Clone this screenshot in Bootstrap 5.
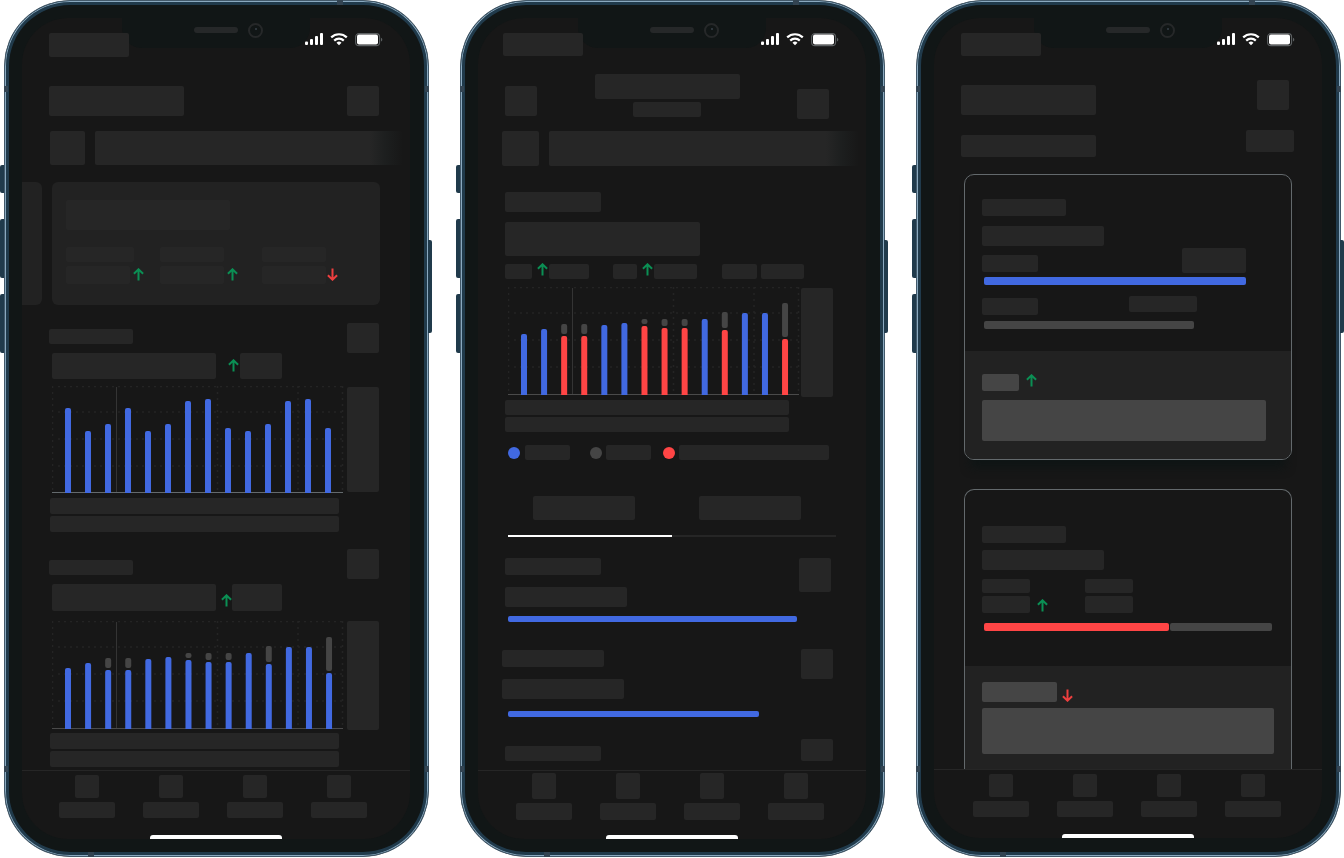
<!DOCTYPE html>
<html lang="en">
<head>
<meta charset="utf-8">
<meta name="viewport" content="width=device-width, initial-scale=1">
<title>Energy app wireframes</title>
<link href="https://cdn.jsdelivr.net/npm/bootstrap@5.3.0/dist/css/bootstrap.min.css" rel="stylesheet">
<script src="https://cdn.jsdelivr.net/npm/bootstrap@5.3.0/dist/js/bootstrap.bundle.min.js" defer></script>
<style>
:root{--block:#262626;--screen:#171717;--bezel:#111616;--blue:#4169e1;--red:#ff4545;--grey:#454545;--steel:#203a4b}
body{background:#fff;font-family:"Liberation Sans",sans-serif;overflow-x:hidden}
.gallery{display:grid;grid-template-columns:repeat(auto-fit,minmax(400px,1fr));gap:31px;padding:0 3px 0 4px}

/* device */
.phone{position:relative;background:var(--bezel);border:1px solid #42596a;border-radius:66px;padding:17px 18px 17px 17px;
 box-shadow:inset 0 0 0 1px #8aa9bf,inset 0 0 0 4px var(--steel)}
.screen{background:var(--screen);border-radius:46px;overflow:hidden;position:relative;z-index:0;padding-top:15px}
.key{position:absolute;width:4px;background:var(--steel)}
.key-l{left:-5px;border-radius:2px 0 0 2px}
.key-r{right:-4px;border-radius:0 2px 2px 0;top:239px;height:93px}
.key-mute{top:164px;height:28px}.key-up{top:218px;height:59px}.key-down{top:293px;height:59px}
.band{position:absolute;background:#334452}
.band-a,.band-b{width:4px;height:6px}
.band-a{top:85px}.band-b{bottom:84px}
.band-l{left:-1px}.band-r{right:-1px}
.band-top{top:-1px;right:85px;width:6px;height:5px}
.band-bot{bottom:-1px;left:83px;width:6px;height:5px}
.notch{position:absolute;z-index:-1;top:0;left:100px;right:100px;height:30px;background:var(--bezel);border-radius:0 0 20px 20px}
.speaker{position:absolute;left:72px;top:9px;width:44px;height:6px;border-radius:3px;background:#262829}
.lens{position:absolute;left:126px;top:5px;width:15px;height:15px;border-radius:50%;border:2px solid #262829}
.lens::after{content:"";position:absolute;left:5px;top:3px;width:2px;height:2px;border-radius:50%;background:#39424a}

/* placeholder blocks */
.blk{display:block;flex:none;background:var(--block);border:0;padding:0;border-radius:2px}
.blk-mid{background:var(--grey)}
.fade-bar{background:linear-gradient(to right,var(--block) calc(100% - 33px),#1d1f1f calc(100% - 18px),var(--screen))}
.meter{flex:none;border-radius:2px;background:var(--blue)}
.arrow{flex:none;width:11px;height:13px;fill:none;stroke-width:2;stroke:#0b8f54}
.arrow-down{stroke:#ed3f3f}
.dot{flex:none;width:12px;height:12px;border-radius:50%;background:var(--blue)}
.tone-red{background:var(--red)}.tone-grey{background:var(--grey)}
.slide{background:#222;border-radius:6px;height:123px}
.slide-prev{border-radius:0 6px 6px 0;width:20px}
.chart{height:108px;flex:none;width:292px}
.chart-tall{height:109px}
.tab-line{height:2px;background:#262626}
.tab-line span{display:block;width:50%;height:2px;background:#fff}
.panel{border:1px solid #63696c;border-radius:10px;overflow:hidden}
.panel-float{box-shadow:0 14px 10px -6px #0f1515}
.panel-cut{border-bottom:0;border-radius:10px 10px 0 0}
.panel-foot{background:#222}
.tabbar{border-top:1px solid #262626;padding-left:37px;gap:28px}
.tabbar-2{padding-left:38px}.tabbar-3{padding-left:39px}
.home{height:4px;width:132px;background:#fff;border-radius:3px 3px 0 0}

/* sizes */
.w24{width:24px}.w27{width:27px}.w32{width:32px}.w35{width:35px}.w37{width:37px}.w40{width:40px}.w42{width:42px}.w43{width:43px}.w45{width:45px}.w48{width:48px}.w50{width:50px}.w56{width:56px}
.w64{width:64px}.w68{width:68px}.w80{width:80px}.w84{width:84px}.w96{width:96px}.w102{width:102px}.w122{width:122px}.w135{width:135px}
.w145{width:145px}.w150{width:150px}.w164{width:164px}.w195{width:195px}.w210{width:210px}.w251{width:251px}.w262{width:262px}
.w185{width:185px}.w284{width:284px}.w289{width:289px}.w292{width:292px}.w75x{width:75px}
.ht6{height:6px}.ht8{height:8px}.ht14{height:14px}.ht15{height:15px}.ht16{height:16px}.ht17{height:17px}.ht18{height:18px}.ht20{height:20px}
.ht22{height:22px}.ht23{height:23px}.ht24{height:24px}.ht25{height:25px}.ht26{height:26px}.ht27{height:27px}.ht30{height:30px}
.ht34{height:34px}.ht35{height:35px}.ht41{height:41px}.ht46{height:46px}.ht105{height:105px}.ht109{height:109px}
/* top gaps */
.tp1{margin-top:1px}.tp2{margin-top:2px}.tp3{margin-top:3px}.tp4{margin-top:4px}.tp5{margin-top:5px}.tp6{margin-top:6px}.tp7{margin-top:7px}
.tp8{margin-top:8px}.tp9{margin-top:9px}.tp10{margin-top:10px}.tp11{margin-top:11px}.tp12{margin-top:12px}.tp13{margin-top:13px}
.tp15{margin-top:15px}.tp17{margin-top:17px}.tp18{margin-top:18px}.tp21{margin-top:21px}.tp22{margin-top:22px}.tp24{margin-top:24px}
.tp26{margin-top:26px}.tp27{margin-top:27px}.tp29{margin-top:29px}.tp35{margin-top:35px}.tp36{margin-top:36px}
.pt16{padding-top:16px}.pt18{padding-top:18px}.pt23{padding-top:23px}.pb15{padding-bottom:15px}.pb18{padding-bottom:18px}.pt24{padding-top:24px}.pt36{padding-top:36px}
/* side gaps */
.st1{margin-left:1px}.st3{margin-left:3px}.st4{margin-left:4px}.st5{margin-left:5px}.st7{margin-left:7px}.st10{margin-left:10px}.st12{margin-left:12px}
.st14{margin-left:14px}.st16{margin-left:16px}.st17{margin-left:17px}.st19{margin-left:19px}.st20{margin-left:20px}.st24{margin-left:24px}.st25{margin-left:25px}
.st27{margin-left:27px}.st28{margin-left:28px}.st30{margin-left:30px}.st55{margin-left:55px}.st37{margin-left:37px}.st64{margin-left:64px}
.en7{margin-right:7px}.en27{margin-right:27px}.en28{margin-right:28px}.en30{margin-right:30px}.en31{margin-right:31px}.en33{margin-right:33px}.en35{margin-right:35px}.en37{margin-right:37px}
.en45{margin-right:45px}.en94{margin-right:94px}
</style>
</head>
<body>
<svg class="d-none" xmlns="http://www.w3.org/2000/svg">
  <symbol id="up" viewBox="0 0 11 13"><path d="M5.5 12.5V1.5M.9 5.7 5.5 1.3l4.6 4.4"/></symbol>
  <symbol id="down" viewBox="0 0 11 13"><path d="M5.5 .5v11M.9 7.3l4.6 4.4 4.6-4.4"/></symbol>
  <symbol id="status" viewBox="0 0 78 14">
    <g fill="#fff"><rect y="8.5" width="3" height="3.5" rx="1"/><rect x="5" y="6" width="3" height="6" rx="1"/><rect x="10" y="3" width="3" height="9" rx="1"/><rect x="15" width="3" height="12" rx="1"/></g>
    <g fill="none" stroke="#fff" stroke-width="2.2"><path d="M26.2 4.4a11.2 11.2 0 0 1 15.6 0"/><path d="M29.2 7.6a7 7 0 0 1 9.6 0"/></g>
    <path fill="#fff" d="M34 12.2l-2.5-2.5a3.8 3.8 0 0 1 5 0z"/>
    <rect x="50.6" y=".6" width="24" height="12" rx="3.4" fill="none" stroke="#5d6163" stroke-width="1.1"/>
    <rect x="52" y="1.6" width="21" height="10" rx="2" fill="#fff"/>
    <path fill="#5d6163" d="M76 4.8c1.8.6 1.8 3.2 0 3.8z"/>
  </symbol>
</svg>

<main class="gallery">

  <!-- Overview -->
  <section class="phone" aria-label="Overview">
    <i class="key key-l key-mute"></i><i class="key key-l key-up"></i><i class="key key-l key-down"></i><i class="key key-r"></i>
    <i class="band band-a band-l"></i><i class="band band-a band-r"></i><i class="band band-b band-l"></i><i class="band band-b band-r"></i><i class="band band-top"></i><i class="band band-bot"></i>
    <div class="screen">
      <div class="notch"><i class="speaker"></i><i class="lens"></i></div>
      <header class="d-flex justify-content-between st27 en27"><span class="blk w80 ht24"></span><svg width="78" height="14"><use href="#status"/></svg></header>
      <div class="d-flex justify-content-between tp29 st27 en31"><span class="blk w135 ht30"></span><button class="blk w32 ht30" aria-label="Menu"></button></div>
      <div class="d-flex tp15 st28 en7"><button class="blk w35 ht34" aria-label="Filter"></button><span class="blk fade-bar flex-fill st10 ht34"></span></div>
      <div class="d-flex tp17 en30">
        <div class="slide slide-prev"></div>
        <div class="slide flex-fill st10 pt18">
          <span class="blk w164 ht30 st14"></span>
          <div class="d-flex tp17 st14">
            <div><span class="blk w68 ht15"></span><div class="d-flex tp4"><span class="blk w64 ht18"></span><svg class="arrow st3 tp2"><use href="#up"/></svg></div></div>
            <div class="st16"><span class="blk w64 ht15"></span><div class="d-flex tp4"><span class="blk w64 ht18"></span><svg class="arrow st3 tp2"><use href="#up"/></svg></div></div>
            <div class="st24"><span class="blk w64 ht15"></span><div class="d-flex tp4"><span class="blk w64 ht18"></span><svg class="arrow arrow-down st1 tp2"><use href="#down"/></svg></div></div>
          </div>
        </div>
      </div>

      <div class="d-flex justify-content-between tp18 st27 en31"><span class="blk w84 ht15 tp6"></span><button class="blk w32 ht30" aria-label="More"></button></div>
      <div class="d-flex st30"><span class="blk w164 ht26"></span><svg class="arrow tp6 st12"><use href="#up"/></svg><span class="blk w42 ht26 st1"></span></div>
      <div class="d-flex tp7 st30 en31 justify-content-between"><svg class="chart" data-series="weekly" role="img" aria-label="Weekly chart"></svg><span class="blk w32 ht105 tp1"></span></div>
      <span class="blk w289 ht16 tp4 st28"></span><span class="blk w289 ht16 tp2 st28"></span>

      <div class="d-flex justify-content-between tp17 st27 en31"><span class="blk w84 ht15 tp11"></span><button class="blk w32 ht30" aria-label="More"></button></div>
      <div class="d-flex tp5 st30"><span class="blk w164 ht27"></span><svg class="arrow tp10 st5"><use href="#up"/></svg><span class="blk w50 ht27"></span></div>
      <div class="d-flex tp10 st30 en31 justify-content-between"><svg class="chart chart-tall" data-series="trend" role="img" aria-label="Trend chart"></svg><span class="blk w32 ht109"></span></div>
      <span class="blk w289 ht16 tp3 st28"></span><span class="blk w289 ht16 tp2 st28"></span>

      <nav class="tabbar d-flex tp3">
        <a href="#" class="tp4" aria-label="Home"><span class="blk w24 ht23 mx-auto"></span><span class="blk w56 ht16 tp4"></span></a>
        <a href="#" class="tp4" aria-label="Usage"><span class="blk w24 ht23 mx-auto"></span><span class="blk w56 ht16 tp4"></span></a>
        <a href="#" class="tp4" aria-label="Goals"><span class="blk w24 ht23 mx-auto"></span><span class="blk w56 ht16 tp4"></span></a>
        <a href="#" class="tp4" aria-label="Account"><span class="blk w24 ht23 mx-auto"></span><span class="blk w56 ht16 tp4"></span></a>
      </nav>
      <div class="home mx-auto tp17"></div>
    </div>
  </section>

  <!-- Detail -->
  <section class="phone" aria-label="Detail">
    <i class="key key-l key-mute"></i><i class="key key-l key-up"></i><i class="key key-l key-down"></i><i class="key key-r"></i>
    <i class="band band-a band-l"></i><i class="band band-a band-r"></i><i class="band band-b band-l"></i><i class="band band-b band-r"></i><i class="band band-top"></i><i class="band band-bot"></i>
    <div class="screen">
      <div class="notch"><i class="speaker"></i><i class="lens"></i></div>
      <header class="d-flex justify-content-between st25 en27"><span class="blk w80 ht23"></span><svg width="78" height="14"><use href="#status"/></svg></header>
      <div class="d-flex justify-content-between align-items-start tp18 st27 en37"><button class="blk w32 ht30 tp12" aria-label="Back"></button>
        <div><span class="blk w145 ht25"></span><span class="blk w68 ht15 tp3 mx-auto"></span></div>
        <button class="blk w32 ht30 tp15" aria-label="Menu"></button></div>
      <div class="d-flex tp12 st24 en7"><button class="blk w37 ht35" aria-label="Filter"></button><span class="blk fade-bar flex-fill st10 ht35"></span></div>
      <span class="blk w96 ht20 tp26 st27"></span>
      <span class="blk w195 ht34 tp10 st27"></span>
      <div class="d-flex tp7 st27">
        <span class="blk w27 ht15 tp1"></span><svg class="arrow st5"><use href="#up"/></svg><span class="blk w40 ht15 tp1 st1"></span>
        <span class="blk w24 ht15 tp1 st24"></span><svg class="arrow st5"><use href="#up"/></svg><span class="blk w43 ht15 tp1 st1"></span>
        <span class="blk w35 ht15 tp1 st25"></span><span class="blk w43 ht15 tp1 st4"></span>
      </div>
      <div class="d-flex tp8 st30 en33 justify-content-between"><svg class="chart chart-tall" data-series="trend" data-alert="true" role="img" aria-label="Usage chart"></svg><span class="blk w32 ht109 tp1"></span></div>
      <span class="blk w284 ht15 tp3 st27"></span><span class="blk w284 ht15 tp2 st27"></span>
      <div class="d-flex align-items-center tp13 st30">
        <span class="dot"></span><span class="blk w45 ht15 st5"></span>
        <span class="dot tone-grey st20"></span><span class="blk w45 ht15 st4"></span>
        <span class="dot tone-red st12"></span><span class="blk w150 ht15 st4"></span>
      </div>
      <div class="d-flex tp36 st55"><button class="blk w102 ht24" aria-label="First tab"></button><button class="blk w102 ht24 st64" aria-label="Second tab"></button></div>
      <div class="tab-line tp15 st30 en30"><span></span></div>

      <div class="d-flex justify-content-between tp21 st27 en35"><div><span class="blk w96 ht17"></span><span class="blk w122 ht20 tp12"></span></div><button class="blk w32 ht34" aria-label="More"></button></div>
      <div class="meter w289 ht6 tp9 st30"></div>
      <div class="d-flex justify-content-between tp27 st24 en33"><div><span class="blk w102 ht17 tp1"></span><span class="blk w122 ht20 tp12"></span></div><button class="blk w32 ht30" aria-label="More"></button></div>
      <div class="meter w251 ht6 tp12 st30"></div>
      <div class="d-flex justify-content-between tp22 st27 en33"><span class="blk w96 ht15 tp7"></span><button class="blk w32 ht22" aria-label="More"></button></div>

      <nav class="tabbar tabbar-2 d-flex tp9">
        <a href="#" class="tp2" aria-label="Home"><span class="blk w24 ht26 mx-auto"></span><span class="blk w56 ht17 tp4"></span></a>
        <a href="#" class="tp2" aria-label="Usage"><span class="blk w24 ht26 mx-auto"></span><span class="blk w56 ht17 tp4"></span></a>
        <a href="#" class="tp2" aria-label="Goals"><span class="blk w24 ht26 mx-auto"></span><span class="blk w56 ht17 tp4"></span></a>
        <a href="#" class="tp2" aria-label="Account"><span class="blk w24 ht26 mx-auto"></span><span class="blk w56 ht17 tp4"></span></a>
      </nav>
      <div class="home mx-auto tp15"></div>
    </div>
  </section>

  <!-- Comparison -->
  <section class="phone" aria-label="Comparison">
    <i class="key key-l key-mute"></i><i class="key key-l key-up"></i><i class="key key-l key-down"></i><i class="key key-r"></i>
    <i class="band band-a band-l"></i><i class="band band-a band-r"></i><i class="band band-b band-l"></i><i class="band band-b band-r"></i><i class="band band-top"></i><i class="band band-bot"></i>
    <div class="screen">
      <div class="notch"><i class="speaker"></i><i class="lens"></i></div>
      <header class="d-flex justify-content-between st27 en27"><span class="blk w80 ht23"></span><svg width="78" height="14"><use href="#status"/></svg></header>
      <div class="d-flex justify-content-between tp24 st27 en33"><span class="blk w135 ht30 tp5"></span><button class="blk w32 ht30" aria-label="Menu"></button></div>
      <div class="d-flex justify-content-between tp15 st27 en28"><span class="blk w135 ht22 tp5"></span><button class="blk w48 ht22" aria-label="Edit"></button></div>

      <article class="panel panel-float tp17 st30 en30 pt24">
        <span class="blk w84 ht17 st17"></span>
        <span class="blk w122 ht20 tp10 st17"></span>
        <div class="d-flex justify-content-between tp2 st17 en45"><span class="blk w56 ht17 tp7"></span><span class="blk w64 ht25"></span></div>
        <div class="meter w262 ht8 tp4 st19"></div>
        <div class="d-flex justify-content-between tp11 st17 en94"><span class="blk w56 ht17 tp2"></span><span class="blk w68 ht16"></span></div>
        <div class="meter tone-grey w210 ht8 tp6 st19"></div>
        <div class="panel-foot tp22 pt23 pb18">
          <div class="d-flex st17"><span class="blk blk-mid w37 ht17"></span><svg class="arrow st7"><use href="#up"/></svg></div>
          <span class="blk blk-mid w284 ht41 tp9 st17"></span>
        </div>
      </article>

      <article class="panel panel-cut tp29 st30 en30 pt36">
        <span class="blk w84 ht17 st17"></span>
        <span class="blk w122 ht20 tp7 st17"></span>
        <div class="d-flex tp9 st17">
          <div><span class="blk w48 ht14"></span><div class="d-flex tp3"><span class="blk w48 ht17"></span><svg class="arrow st7 tp3"><use href="#up"/></svg></div></div>
          <div class="st37"><span class="blk w48 ht14"></span><span class="blk w48 ht17 tp3"></span></div>
        </div>
        <div class="d-flex tp10 st19"><div class="meter tone-red w185 ht8"></div><div class="meter tone-grey w102 ht8 st1"></div></div>
        <div class="panel-foot tp35 pt16 pb15">
          <div class="d-flex st17"><span class="blk blk-mid w75x ht20"></span><svg class="arrow arrow-down st5 tp7"><use href="#down"/></svg></div>
          <span class="blk blk-mid w292 ht46 tp6 st17"></span>
        </div>
      </article>

      <nav class="tabbar tabbar-3 d-flex">
        <a href="#" class="tp4" aria-label="Home"><span class="blk w24 ht23 mx-auto"></span><span class="blk w56 ht16 tp4"></span></a>
        <a href="#" class="tp4" aria-label="Usage"><span class="blk w24 ht23 mx-auto"></span><span class="blk w56 ht16 tp4"></span></a>
        <a href="#" class="tp4" aria-label="Goals"><span class="blk w24 ht23 mx-auto"></span><span class="blk w56 ht16 tp4"></span></a>
        <a href="#" class="tp4" aria-label="Account"><span class="blk w24 ht23 mx-auto"></span><span class="blk w56 ht16 tp4"></span></a>
      </nav>
      <div class="home mx-auto tp17"></div>
    </div>
  </section>
</main>

<script>
// Each entry is [bar height, optional bottom and height of the grey target segment]
const series = {
  weekly: [85,62,69,85,62,69,92,94,65,62,69,92,94,65].map(v => [v]),
  trend: [[61],[66],[59,61,10],[59,61,10],[70],[72],[69,71,5],[67,69,7],[67,69,7],[76],[65,67,16],[82],[82],[56,58,34]]
};
document.querySelectorAll('svg.chart').forEach(svg => {
  const weekly = svg.dataset.series === 'weekly';
  const base = weekly ? 107 : 108;
  const grid = 'stroke="#242424" stroke-width="1.5" stroke-dasharray="2 4"';
  let out = '';
  [0.5, 26, 53, 80].forEach(y => out += `<path ${grid} d="M6 ${y}H291"/>`);
  [0.5, 165.5, 246, 290.5].forEach(x => out += `<path ${grid} d="M${x} 0V${base - 2}"/>`);
  out += `<path stroke="#343434" d="M64.5 1V${base}"/>`;
  out += `<path stroke="${weekly ? '#646a6d' : '#4a4a4a'}" d="M0 ${base - .5}H291"/>`;
  series[svg.dataset.series].forEach(([h, from, len], i) => {
    const x = 13.5 + i * (weekly ? 20 : 20.08);
    const fill = svg.dataset.alert && len ? '#ff4545' : '#4169e1';
    const top = base - h;
    out += `<path fill="${fill}" d="M${x - .5} ${base}V${top + 2}q0-2 2-2h2q2 0 2 2V${base}z"/>`;
    if (len) out += `<rect fill="#454545" x="${x - .5}" y="${base - from - len}" width="6" height="${len}" rx="2"/>`;
  });
  svg.innerHTML = out;
});
</script>
</body>
</html>
